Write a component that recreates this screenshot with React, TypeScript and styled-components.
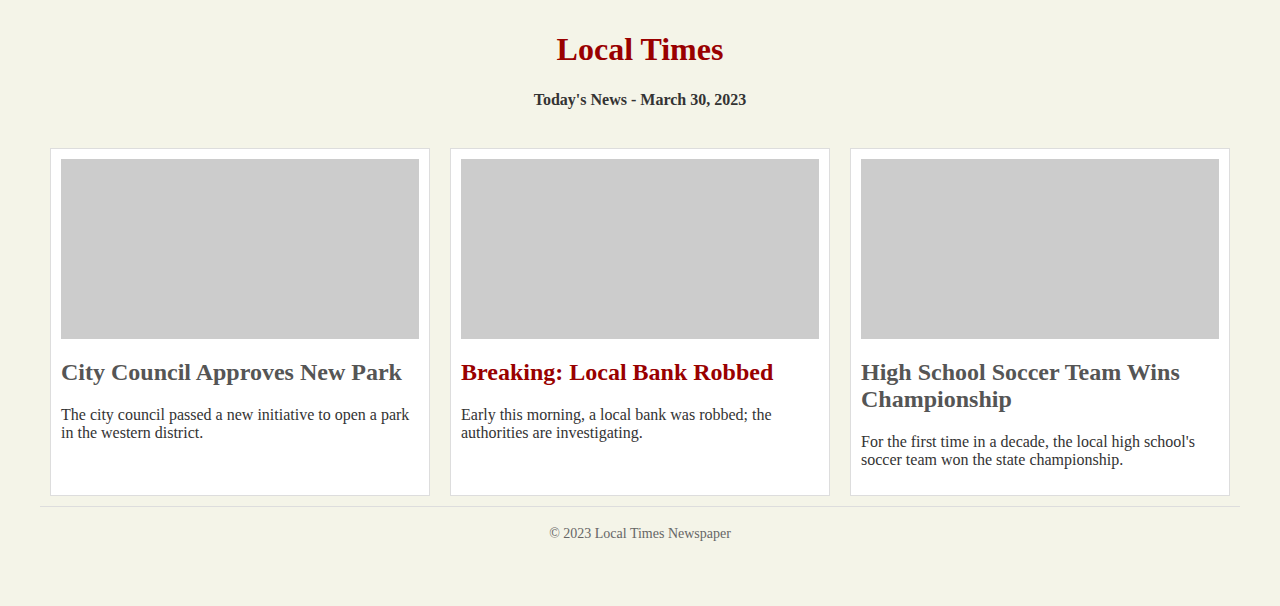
import React from "react";
import styled, { createGlobalStyle } from "styled-components";

const GlobalStyle = createGlobalStyle`
  html, body { background: #f4f4e8; }
  body {
    margin: 8px;
    font-family: "Liberation Serif", "Times New Roman", serif;
    color: #333;
  }
`;

const Page = styled.div`
  max-width: 1200px;
  margin: 0 auto;
`;

const Header = styled.header`
  text-align: center;
  padding-bottom: 13px;
`;

const Title = styled.h1`
  font-size: 32px;
  font-weight: bold;
  color: #990000;
  margin: 23px 0 23px;
`;

const Subtitle = styled.p`
  font-size: 16px;
  font-weight: bold;
  color: #333;
  margin: 16px 0;
`;

const Grid = styled.main`
  display: grid;
  grid-template-columns: repeat(3, 1fr);
  gap: 20px;
  padding: 10px;
`;

const Card = styled.article`
  background: #fff;
  border: 1px solid #ddd;
  padding: 10px;
`;

const Thumb = styled.div`
  height: 180px;
  background: #ccc;
`;

const Headline = styled.h2<{ $breaking?: boolean }>`
  font-size: 24px;
  font-weight: bold;
  margin: 20px 0;
  color: ${(p) => (p.$breaking ? "#990000" : "#555")};
`;

const Summary = styled.p`
  font-size: 16px;
  margin: 16px 0;
  color: #333;
`;

const Footer = styled.footer`
  border-top: 1px solid #ddd;
  text-align: center;
  padding: 19px 0;
  font-size: 14px;
  color: #666;
`;

const articles = [
  {
    title: "City Council Approves New Park",
    text: "The city council passed a new initiative to open a park in the western district.",
  },
  {
    title: "Breaking: Local Bank Robbed",
    text: "Early this morning, a local bank was robbed; the authorities are investigating.",
    breaking: true,
  },
  {
    title: "High School Soccer Team Wins Championship",
    text: "For the first time in a decade, the local high school's soccer team won the state championship.",
  },
];

export default function App() {
  return (
    <>
      <GlobalStyle />
      <Page>
        <Header>
          <Title>Local Times</Title>
          <Subtitle>Today's News - March 30, 2023</Subtitle>
        </Header>
        <Grid>
          {articles.map((a) => (
            <Card key={a.title}>
              <Thumb />
              <Headline $breaking={a.breaking}>{a.title}</Headline>
              <Summary>{a.text}</Summary>
            </Card>
          ))}
        </Grid>
        <Footer>© 2023 Local Times Newspaper</Footer>
      </Page>
    </>
  );
}
